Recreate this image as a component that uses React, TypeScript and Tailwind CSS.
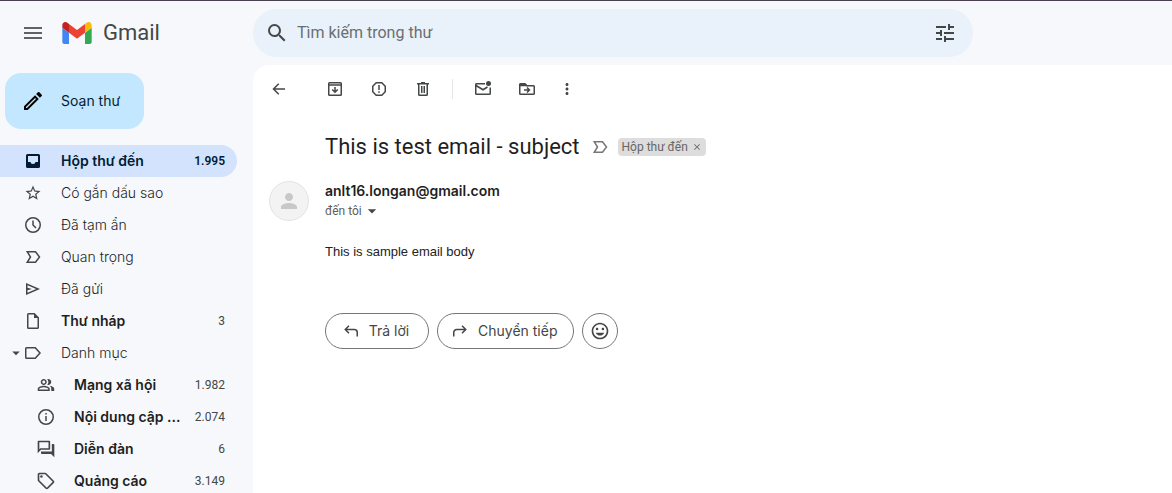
import type { ReactNode } from "react";
import {
  MdArrowDropDown,
  MdClose,
  MdMenu,
  MdMoreVert,
  MdOutlineForum,
  MdOutlineLocalOffer,
  MdOutlineModeEdit,
  MdOutlinePeopleAlt,
  MdOutlineInsertEmoticon,
  MdPerson,
  MdSearch,
  MdStarOutline,
  MdTune,
} from "react-icons/md";

function Glyph({ children, size = 20 }: { children: ReactNode; size?: number }) {
  return (
    <svg
      width={size}
      height={size}
      viewBox="0 0 20 20"
      fill="none"
      stroke="currentColor"
      strokeWidth={1.5}
      aria-hidden="true"
    >
      {children}
    </svg>
  );
}

const InboxIcon = () => (
  <Glyph>
    <path
      fill="currentColor"
      stroke="none"
      fillRule="evenodd"
      d="M4.500 3h11A1.500 1.500 0 0 1 17 4.500v11a1.500 1.500 0 0 1-1.500 1.500h-11A1.500 1.500 0 0 1 3 15.500v-11A1.500 1.500 0 0 1 4.500 3zM5 5v6h2.500a2.500 2 0 0 0 5 0H15V5z"
    />
  </Glyph>
);
const ClockIcon = () => (
  <Glyph>
    <circle cx="10" cy="10" r="7.250" />
    <path d="M10 5.500V10l3 3" />
  </Glyph>
);
const ImportantIcon = () => (
  <Glyph>
    <path d="M4.250 4.750H12.500L16.500 10l-4 5.250H4.250L7.500 10z" />
  </Glyph>
);
const SendIcon = () => (
  <Glyph>
    <path
      fill="currentColor"
      stroke="none"
      d="M3 16V4l14 6-14 6zm1.500-2.250L13.125 10 4.500 6.250v2.500L9 10l-4.500 1.250v2.500z"
    />
  </Glyph>
);
const DraftIcon = () => (
  <Glyph>
    <path d="M5.500 2.750h5.750l4 4v9.750a.75.75 0 0 1-.75.75h-9a.75.75 0 0 1-.75-.75v-13a.75.75 0 0 1 .75-.75z" />
    <path fill="currentColor" stroke="none" d="M11 2.500V7h4.500z" />
  </Glyph>
);
const LabelIcon = () => (
  <Glyph>
    <path d="M3.500 4.750h8.750L17 10l-4.750 5.250H3.500a.75.75 0 0 1-.75-.75v-9a.75.75 0 0 1 .75-.75z" />
  </Glyph>
);
const InfoIcon = () => (
  <Glyph>
    <circle cx="10" cy="10" r="7.250" />
    <path d="M10 9v5M10 6v1.500" />
  </Glyph>
);
const BackIcon = () => (
  <Glyph>
    <path d="M16 10H5M9.750 4.750L4.500 10l5.250 5.250" />
  </Glyph>
);
const ArchiveIcon = () => (
  <Glyph>
    <rect x="3.750" y="3.750" width="12.500" height="12.500" rx="0.750" />
    <path d="M3.750 6h12.500M10 8v5M7.250 10.500L10 13.250l2.750-2.750" />
  </Glyph>
);
const SpamIcon = () => (
  <Glyph>
    <path d="M7.200 3.750h5.600l3.450 3.450v5.600l-3.450 3.450H7.200L3.750 12.800V7.200z" />
    <path d="M10 6v5M10 12.250v1.500" />
  </Glyph>
);
const TrashIcon = () => (
  <Glyph>
    <path d="M4 4.750h12M8 3.750h4M5.750 5v10.500a.75.75 0 0 0 .75.75h7a.75.75 0 0 0 .75-.75V5M8.750 7v7M11.250 7v7" />
  </Glyph>
);
const UnreadIcon = () => (
  <Glyph>
    <path d="M12 4.750H3.500a.75.75 0 0 0-.75.75v9a.75.75 0 0 0 .75.75h13a.75.75 0 0 0 .75-.75V8.500M3 6.500l7 4.250 4.500-2.750" />
    <circle cx="15.500" cy="4.500" r="2.500" fill="currentColor" stroke="none" />
  </Glyph>
);
const MoveIcon = () => (
  <Glyph>
    <path d="M3.500 15.250h13a.75.75 0 0 0 .75-.75v-7a.75.75 0 0 0-.75-.75H10l-2-2H3.500a.75.75 0 0 0-.75.75v9a.75.75 0 0 0 .75.75z" />
    <path d="M3 5.500h5l1 1H3zM7 11h5M10 8.500l2.500 2.500-2.500 2.500" />
  </Glyph>
);
const ReplyIcon = () => (
  <Glyph>
    <path d="M16.250 15.500V11.500a3 3 0 0 0-3-3H4.500M8 4.750L4.250 8.500 8 12.250" />
  </Glyph>
);
const ForwardIcon = () => (
  <Glyph>
    <path d="M3.750 15.500V11.500a3 3 0 0 1 3-3H15.500M12 4.750l3.750 3.750L12 12.250" />
  </Glyph>
);

const GmailMark = () => (
  <svg width="30" height="22" viewBox="52 42 88 66" aria-hidden="true">
    <path fill="#4285f4" d="M58 108h14V74L52 59v43c0 3.320 2.690 6 6 6" />
    <path fill="#34a853" d="M120 108h14c3.320 0 6-2.690 6-6V59l-20 15" />
    <path fill="#fbbc04" d="M120 48v26l20-15v-8c0-7.420-8.470-11.650-14.400-7.200" />
    <path fill="#ea4335" d="M72 74V48l24 18 24-18v26L96 92" />
    <path fill="#c5221f" d="M52 51v8l20 15V48l-5.600-4.200c-5.940-4.450-14.400-.22-14.400 7.200" />
  </svg>
);

type Folder = {
  name: string;
  icon: ReactNode;
  count?: string;
  active?: boolean;
  bold?: boolean;
  nested?: boolean;
  expandable?: boolean;
};

const folders: Folder[] = [
  { name: "Hộp thư đến", icon: <InboxIcon />, count: "1.995", active: true, bold: true },
  { name: "Có gắn dấu sao", icon: <MdStarOutline size={18} /> },
  { name: "Đã tạm ẩn", icon: <ClockIcon /> },
  { name: "Quan trọng", icon: <ImportantIcon /> },
  { name: "Đã gửi", icon: <SendIcon /> },
  { name: "Thư nháp", icon: <DraftIcon />, count: "3", bold: true },
  { name: "Danh mục", icon: <LabelIcon />, expandable: true },
  { name: "Mạng xã hội", icon: <MdOutlinePeopleAlt size={18} />, count: "1.982", bold: true, nested: true },
  { name: "Nội dung cập ...", icon: <InfoIcon />, count: "2.074", bold: true, nested: true },
  { name: "Diễn đàn", icon: <MdOutlineForum size={20} />, count: "6", bold: true, nested: true },
  { name: "Quảng cáo", icon: <MdOutlineLocalOffer size={20} />, count: "3.149", bold: true, nested: true },
];

function FolderRow({ name, icon, count, active, bold, nested, expandable }: Folder) {
  return (
    <li>
      <a
        href="#"
        className={`relative mr-4 flex h-8 items-center rounded-r-full pr-3 ${nested ? "pl-9" : "pl-[23px]"} ${
          active ? "bg-[#d3e3fd] text-[#001d35]" : "text-[#444746]"
        }`}
      >
        {expandable && <MdArrowDropDown size={18} className="absolute left-[7px]" />}
        <span className="flex w-5 shrink-0 justify-center">{icon}</span>
        <span
          className={`ml-[18px] flex-1 text-sm whitespace-nowrap ${
            active ? "font-semibold" : bold ? "font-semibold text-[#1f1f1f]" : "font-light text-[#1f1f1f]"
          }`}
        >
          {name}
        </span>
        {count && (
          <span className={`ml-2 font-['Roboto',sans-serif] text-xs ${active ? "font-semibold" : ""}`}>{count}</span>
        )}
      </a>
    </li>
  );
}

function ToolButton({ label, children, className = "w-11" }: { label: string; children: ReactNode; className?: string }) {
  return (
    <button type="button" aria-label={label} className={`flex h-10 items-center justify-center ${className}`}>
      {children}
    </button>
  );
}

export default function App() {
  return (
    <div className="flex h-screen flex-col overflow-hidden border-t border-[#4a4050] bg-[#f6f8fc] font-['Inter',sans-serif] text-[#444746]">
      <header className="flex h-16 shrink-0 items-center">
        <div className="flex w-[253px] shrink-0 items-center pl-[21px]">
          <button type="button" aria-label="Menu chính" className="text-[#5f6368]">
            <MdMenu size={24} />
          </button>
          <a href="#" className="ml-[17px] flex items-center gap-[11px] font-['Roboto',sans-serif] text-[22px] leading-6">
            <GmailMark />
            Gmail
          </a>
        </div>
        <form role="search" className="flex h-12 max-w-[720px] flex-1 items-center gap-2 rounded-full bg-[#e9f1fb] px-3">
          <button type="submit" aria-label="Tìm kiếm">
            <MdSearch size={24} />
          </button>
          <input
            type="text"
            aria-label="Tìm kiếm trong thư"
            placeholder="Tìm kiếm trong thư"
            className="min-w-0 flex-1 bg-transparent font-['Roboto',sans-serif] text-base outline-none placeholder:text-[#6b6e70]"
          />
          <button type="button" aria-label="Tùy chọn tìm kiếm" className="mr-1">
            <MdTune size={24} />
          </button>
        </form>
      </header>

      <div className="flex min-h-0 flex-1">
        <aside className="w-[253px] shrink-0 overflow-hidden">
          <button
            type="button"
            className="mt-2 ml-[5px] flex h-14 items-center gap-4 rounded-2xl bg-[#c2e7ff] pr-6 pl-4 text-sm text-[#001d35]"
          >
            <MdOutlineModeEdit size={24} className="text-black" />
            Soạn thư
          </button>
          <nav className="mt-4">
            <ul>
              {folders.map((folder) => (
                <FolderRow key={folder.name} {...folder} />
              ))}
            </ul>
          </nav>
        </aside>

        <main className="min-w-0 flex-1 rounded-tl-2xl bg-white">
          <div className="flex h-12 items-center pl-1">
            <ToolButton label="Quay lại">
              <BackIcon />
            </ToolButton>
            <div className="ml-3 flex items-center">
              <ToolButton label="Lưu trữ">
                <ArchiveIcon />
              </ToolButton>
              <ToolButton label="Báo cáo vi phạm">
                <SpamIcon />
              </ToolButton>
              <ToolButton label="Xóa">
                <TrashIcon />
              </ToolButton>
              <span className="ml-[7px] h-5 w-px bg-[#e4e6e8]" />
              <ToolButton label="Đánh dấu là chưa đọc" className="ml-2 w-11">
                <UnreadIcon />
              </ToolButton>
              <ToolButton label="Di chuyển">
                <MoveIcon />
              </ToolButton>
              <ToolButton label="Thêm" className="w-9">
                <MdMoreVert size={18} />
              </ToolButton>
            </div>
          </div>

          <article className="px-4">
            <div className="flex items-center pt-5 pl-14 font-['Roboto',sans-serif]">
              <h1 className="text-[22px] leading-7 text-[#1f1f1f]">This is test email - subject</h1>
              <span className="ml-[10px] text-[#747775]">
                <ImportantIcon />
              </span>
              <span className="ml-2 flex h-[18px] items-center gap-1 rounded bg-[#ddd] px-1 text-xs text-[#666]">
                Hộp thư đến
                <button type="button" aria-label="Xóa nhãn Hộp thư đến">
                  <MdClose size={10} />
                </button>
              </span>
            </div>

            <div className="mt-5 flex gap-4">
              <div className="flex size-10 shrink-0 items-center justify-center rounded-full border border-[#e3e3e3] bg-[#f3f3f3] text-[#c8c8c8]">
                <MdPerson size={24} />
              </div>
              <div>
                <div className="text-sm leading-5 font-semibold text-[#1f1f1f]">anlt16.longan@gmail.com</div>
                <button
                  type="button"
                  className="flex items-center font-['Roboto',sans-serif] text-xs leading-5 text-[#5e5e5e]"
                >
                  đến tôi
                  <MdArrowDropDown size={20} className="text-[#444746]" />
                </button>
              </div>
            </div>

            <p className="mt-5 pl-14 font-['Liberation_Sans',sans-serif] text-[13px] leading-[22px] text-[#222]">
              This is sample email body
            </p>

            <div className="mt-[50px] flex gap-2 pl-14 text-sm">
              <button
                type="button"
                className="flex h-9 min-w-[104px] items-center justify-center gap-2 rounded-full border border-[#747775] pr-4 pl-3"
              >
                <ReplyIcon />
                Trả lời
              </button>
              <button
                type="button"
                className="flex h-9 min-w-[104px] items-center justify-center gap-2 rounded-full border border-[#747775] pr-4 pl-3"
              >
                <ForwardIcon />
                Chuyển tiếp
              </button>
              <button
                type="button"
                aria-label="Thêm biểu tượng cảm xúc"
                className="flex size-9 items-center justify-center rounded-full border border-[#747775]"
              >
                <MdOutlineInsertEmoticon size={20} />
              </button>
            </div>
          </article>
        </main>
      </div>
    </div>
  );
}
